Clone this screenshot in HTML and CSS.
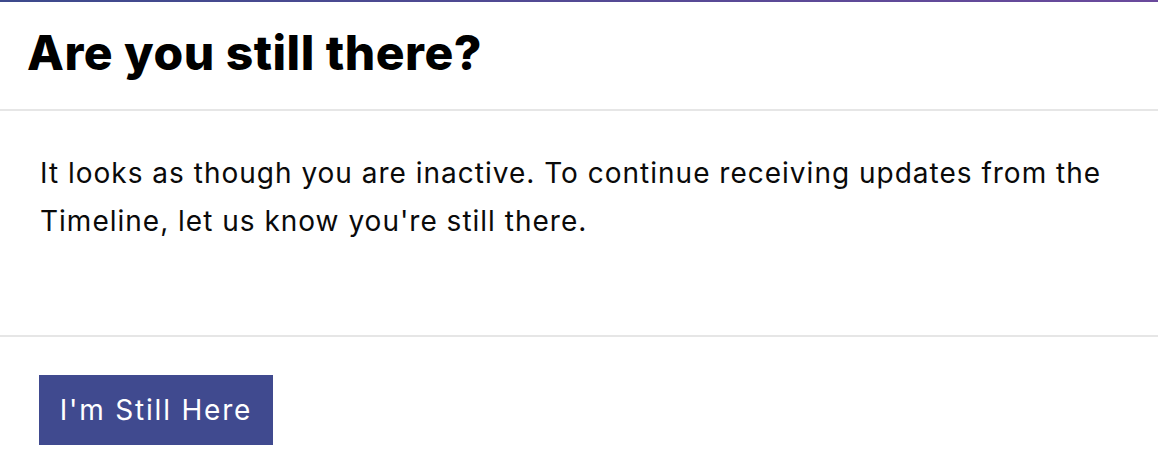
FILE: index.html
```html
<!DOCTYPE html>
<html lang="en">

<head>
  <meta charset="UTF-8">
  <meta name="viewport" content="width=device-width, initial-scale=1.0">
  <title>Are you still there?</title>
  <link rel="stylesheet" href="styles.css">
</head>

<body>
  <div class="modal">
    <div class="modal-header">
      <h2 class="modal-title">Are you still there?</h2>
    </div>
    <div class="modal-body">
      <p>It looks as though you are inactive. To continue receiving updates from the Timeline, let us know you're still there.</p>
    </div>
    <div class="modal-footer">
      <button type="button" class="still-here">I'm Still Here</button>
    </div>
  </div>
</body>

</html>
```

FILE: styles.css
```css
body {
  margin: 0;
  font-family: Inter, "Open Sans", Arial, sans-serif;
  background: #fff;
  color: #0a0a0a;
}

.modal {
  border-top: 2px solid;
  border-image: linear-gradient(to right, #3d4a8c, #6a4a9c) 1;
}

.modal-header {
  padding: 22px 27px 27px;
  border-bottom: 2px solid #e6e6e6;
}

.modal-title {
  margin: 0;
  font-size: 48px;
  line-height: 58px;
  font-weight: 800;
  color: #000;
  letter-spacing: 0.5px;
}

.modal-body {
  height: 226px;
  padding: 0 40px;
  border-bottom: 2px solid #e6e6e6;
  box-sizing: border-box;
}

.modal-body p {
  margin: 0;
  padding-top: 38px;
  font-size: 28px;
  line-height: 48px;
  letter-spacing: 1px;
  max-width: 1078px;
}

.modal-footer {
  padding: 38px 39px;
}

.still-here {
  width: 234px;
  height: 70px;
  padding: 0;
  background-color: #404a8f;
  color: white;
  border: none;
  font-family: inherit;
  font-size: 28px;
  letter-spacing: 1.8px;
  cursor: pointer;
}

.still-here:hover {
  background-color: #343d78;
}
```
